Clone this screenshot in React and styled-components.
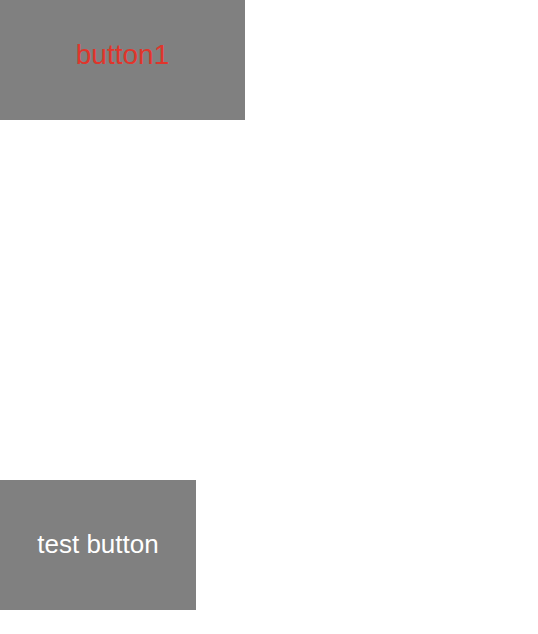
import React from "react";
import styled, { createGlobalStyle } from "styled-components";

const Global = createGlobalStyle`
  html, body { margin: 0; padding: 0; background: #ffffff; }
  body { font-family: "Liberation Sans", Arial, sans-serif; }
`;

const Page = styled.div`
  display: flex;
  flex-direction: column;
  align-items: flex-start;
  gap: 360px;
  width: 538px;
  height: 634px;
`;

const Button = styled.button`
  display: flex;
  align-items: center;
  justify-content: center;
  box-sizing: border-box;
  width: ${(p) => p.$w}px;
  height: ${(p) => p.$h}px;
  margin: 0;
  padding: 0 0 ${(p) => p.$lift}px 0;
  border: none;
  background: #808080;
  color: ${(p) => p.$color};
  font-family: "Liberation Sans", Arial, sans-serif;
  font-size: ${(p) => p.$size}px;
  line-height: 1;
  cursor: pointer;
`;

export default function App() {
  return (
    <>
      <Global />
      <Page>
        <Button $w={245} $h={120} $color="#e0352b" $size={28} $lift={10}>
          button1
        </Button>
        <Button $w={196} $h={130} $color="#ffffff" $size={26} $lift={2}>
          test button
        </Button>
      </Page>
    </>
  );
}
